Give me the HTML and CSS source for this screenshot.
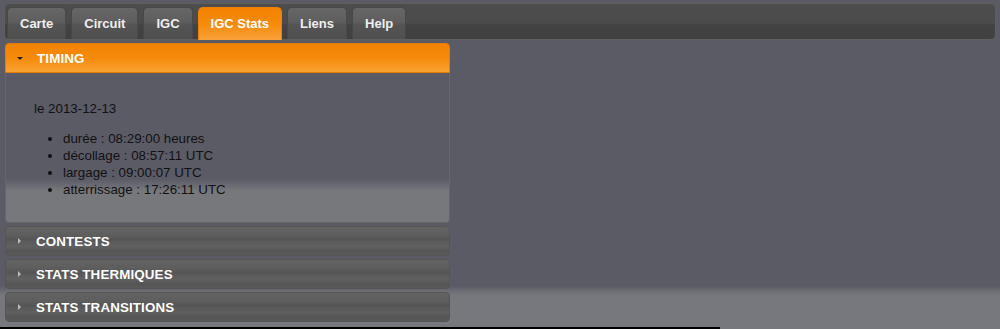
FILE: index.html
```html
<!DOCTYPE html>
<html lang="fr">
<head>
    <meta charset="UTF-8">
    <meta name="viewport" content="width=device-width, initial-scale=1.0">
    <title>IGC Stats</title>
    <link rel="stylesheet" href="styles.css">
</head>
<body>
    <div class="tabs">
        <ul class="tab-nav">
            <li class="tab"><a href="#carte">Carte</a></li>
            <li class="tab"><a href="#circuit">Circuit</a></li>
            <li class="tab"><a href="#igc">IGC</a></li>
            <li class="tab active"><a href="#stats">IGC Stats</a></li>
            <li class="tab"><a href="#liens">Liens</a></li>
            <li class="tab"><a href="#help">Help</a></li>
        </ul>

        <div class="accordion">
            <h3 class="acc-header open"><span class="acc-icon"></span>TIMING</h3>
            <div class="acc-content">
                <p>le 2013-12-13</p>
                <ul>
                    <li>durée : 08:29:00 heures</li>
                    <li>décollage : 08:57:11 UTC</li>
                    <li>largage : 09:00:07 UTC</li>
                    <li>atterrissage : 17:26:11 UTC</li>
                </ul>
            </div>
            <h3 class="acc-header"><span class="acc-icon"></span>CONTESTS</h3>
            <h3 class="acc-header"><span class="acc-icon"></span>STATS THERMIQUES</h3>
            <h3 class="acc-header"><span class="acc-icon"></span>STATS TRANSITIONS</h3>
        </div>
    </div>
    <div class="bottom-line"></div>
</body>
</html>
```

FILE: styles.css
```css
body {
    margin: 0;
    padding: 0;
    height: 329px;
    overflow: hidden;
    display: flex;
    flex-direction: column;
    font-family: "Liberation Sans", Arial, sans-serif;
    font-size: 13.33px;
    background: linear-gradient(#5b5b66 0, #5b5b66 286px, #6f7076 292px, #77787d 296px, #77787d 100%);
}

.tabs {
    height: 327px;
    display: flex;
    flex-direction: column;
}

.tab-nav {
    list-style: none;
    margin: 3px 4px 0 4px;
    padding: 3px 2px 0 2px;
    height: 32px;
    display: flex;
    gap: 5px;
    border: 1px solid #5f5f5f;
    border-radius: 5px;
    background: linear-gradient(#4d4d4d 0, #4b4b4b 55%, #434343 58%, #404040 100%);
}

.tab {
    height: 31px;
    border: 1px solid #484848;
    border-bottom: none;
    border-radius: 5px 5px 0 0;
    background: linear-gradient(#666 0, #5e5e5e 45%, #545454 55%, #4f4f4f 100%);
}

.tab a {
    display: block;
    padding: 0 12px;
    font-size: 13px;
    line-height: 31px;
    color: #eee;
    font-weight: bold;
    text-decoration: none;
}

.tab.active {
    height: 32px;
    border-color: #f08000;
    background: linear-gradient(#f38300 0, #f58a0c 50%, #f9a23a 100%);
}

.tab.active a {
    color: #fff;
}

.accordion {
    width: 445px;
    margin: 3px 0 0 5px;
    display: flex;
    flex-direction: column;
    gap: 3px;
}

.acc-header {
    margin: 0;
    height: 28px;
    display: flex;
    align-items: center;
    padding-left: 12px;
    font-size: 13.33px;
    font-weight: bold;
    letter-spacing: 0.15px;
    color: #fff;
    border: 1px solid #555;
    border-radius: 4px;
    background: linear-gradient(#646464 0, #5d5d5d 30%, #555 45%, #5c5c5c 55%, #606060 70%, #555 85%, #5a5a5a 100%);
}

.acc-header.open {
    border-color: #e87c00;
    border-radius: 4px 4px 0 0;
    background: linear-gradient(#f38300 0, #f58a0c 50%, #f9a232 100%);
}

.acc-icon {
    width: 0;
    height: 0;
    margin-right: 15px;
    border-top: 3px solid transparent;
    border-bottom: 3px solid transparent;
    border-left: 3px solid #bbb;
}

.acc-header.open .acc-icon {
    margin-left: -1px;
    margin-right: 14px;
    border-left: 3px solid transparent;
    border-right: 3px solid transparent;
    border-top: 3px solid #222;
    border-bottom: none;
}

.acc-content {
    margin-top: -3px;
    padding: 14px 28px 13px 28px;
    height: 122px;
    border: 1px solid #666;
    border-top: none;
    border-radius: 0 0 4px 4px;
    color: #111;
    background: linear-gradient(#5b5b66 0, #5b5b66 106px, #6e6f75 114px, #77787c 118px, #77787c 100%);
}

.acc-content p {
    margin: 13px 0;
    line-height: 17px;
}

.acc-content ul {
    margin: 13px 0;
    padding-left: 29px;
    line-height: 17px;
}

.bottom-line {
    width: 720px;
    height: 2px;
    background-color: #000;
}
```
